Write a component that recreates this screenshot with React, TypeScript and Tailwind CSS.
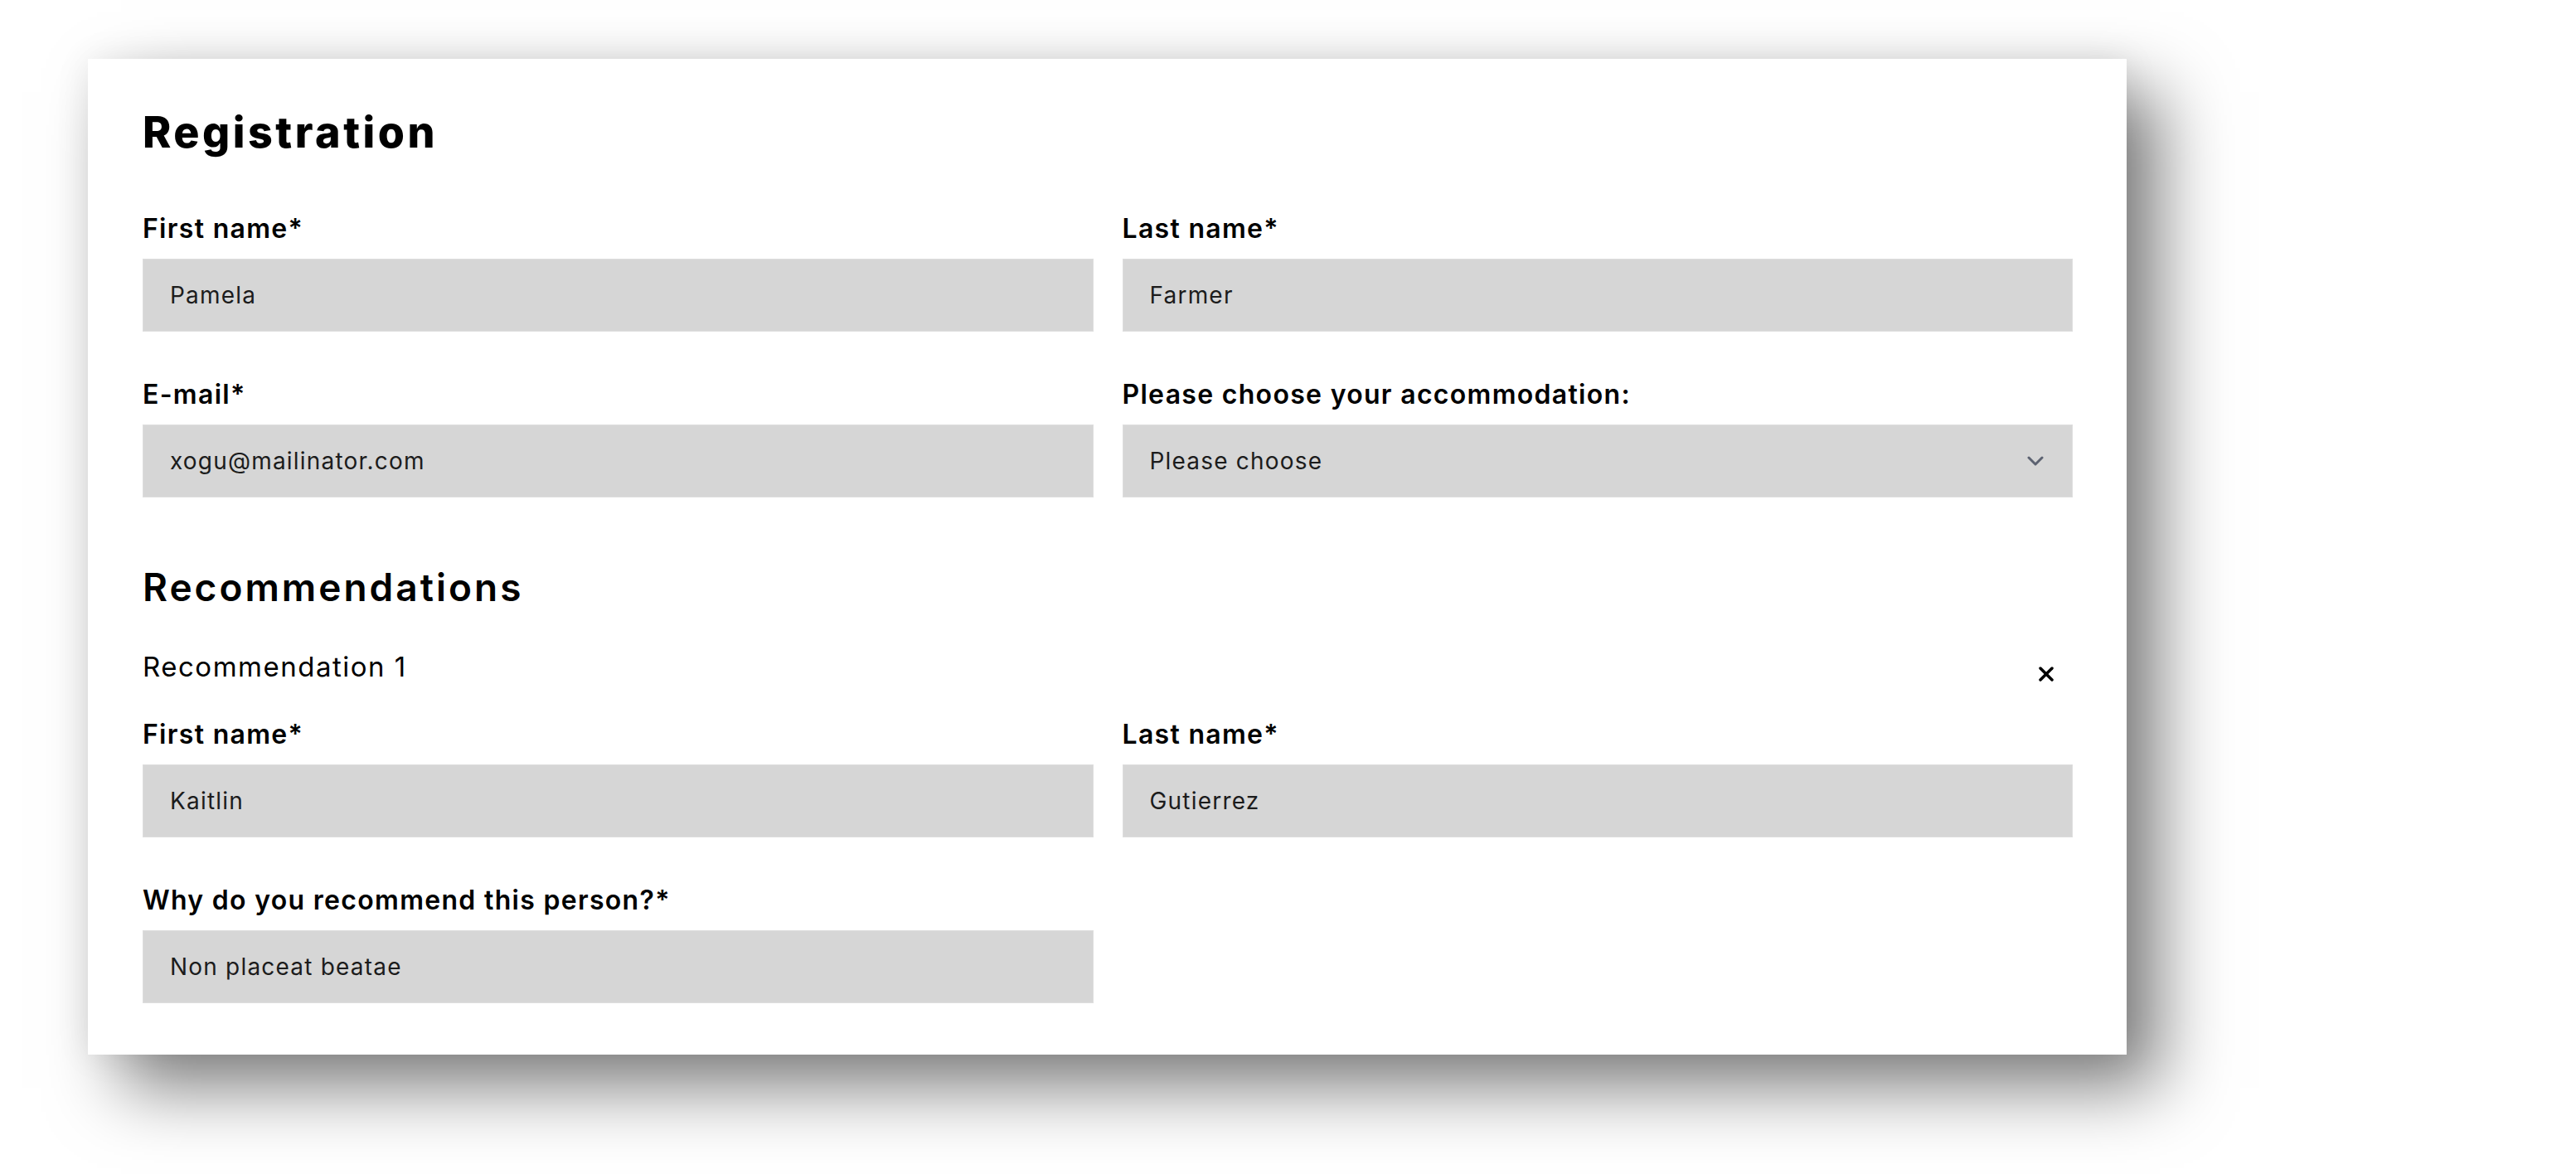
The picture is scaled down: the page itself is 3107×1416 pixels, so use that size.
import React from "react";

function Field({
  label,
  value,
  select,
}: {
  label: string;
  value: string;
  select?: boolean;
}) {
  return (
    <div className="flex flex-col">
      <label className="text-[32px] leading-[40px] font-semibold tracking-[1.3px] text-black">
        {label}
      </label>
      {select ? (
        <div className="mt-[16px] flex h-[88px] items-center justify-between border border-[#dedede] bg-[#d6d6d6] pl-[32px] pr-[34px] text-[28px] tracking-[1.2px] text-[#1c1c1c]">
          <span>{value}</span>
          <svg width="20" height="12" viewBox="0 0 20 12" fill="none">
            <polyline
              points="2,2 10,10 18,2"
              stroke="#5c6271"
              strokeWidth="3"
              strokeLinecap="round"
              strokeLinejoin="round"
            />
          </svg>
        </div>
      ) : (
        <input
          readOnly
          defaultValue={value}
          className="mt-[16px] h-[88px] w-full border border-[#dedede] bg-[#d6d6d6] pl-[32px] text-[28px] tracking-[1.2px] text-[#1c1c1c] outline-none"
        />
      )}
    </div>
  );
}

export default function App() {
  return (
    <div className="min-h-screen bg-white pl-[106px] pt-[71px] font-['Inter',sans-serif] text-black">
      <div className="w-[2459px] bg-white pl-[66px] pr-[65px] pt-[60px] pb-[62px] shadow-[40px_40px_80px_rgba(0,0,0,0.5),0_0_40px_rgba(0,0,0,0.08)]">
        <h1 className="text-[52px] leading-[58px] font-extrabold tracking-[3.5px]">Registration</h1>

        <div className="mt-[67px] grid grid-cols-2 gap-x-[35px] gap-y-[56px]">
          <Field label="First name*" value="Pamela" />
          <Field label="Last name*" value="Farmer" />
          <Field label="E-mail*" value="xogu@mailinator.com" />
          <Field label="Please choose your accommodation:" value="Please choose" select />
        </div>

        <h2 className="mt-[82px] text-[46px] leading-[52px] font-semibold tracking-[3px]">
          Recommendations
        </h2>

        <div className="mt-[50px] flex items-start justify-between">
          <span className="text-[33px] leading-[40px] tracking-[1.5px]">Recommendation 1</span>
          <button className="mr-[23px] mt-[20px] flex h-[18px] w-[18px] items-center justify-center">
            <svg width="18" height="18" viewBox="0 0 18 18" fill="none">
              <line x1="2" y1="2" x2="16" y2="16" stroke="#000" strokeWidth="3.5" strokeLinecap="round" />
              <line x1="16" y1="2" x2="2" y2="16" stroke="#000" strokeWidth="3.5" strokeLinecap="round" />
            </svg>
          </button>
        </div>

        <div className="mt-[42px] grid grid-cols-2 gap-x-[35px] gap-y-[56px]">
          <Field label="First name*" value="Kaitlin" />
          <Field label="Last name*" value="Gutierrez" />
          <Field label="Why do you recommend this person?*" value="Non placeat beatae" />
        </div>
      </div>
    </div>
  );
}
